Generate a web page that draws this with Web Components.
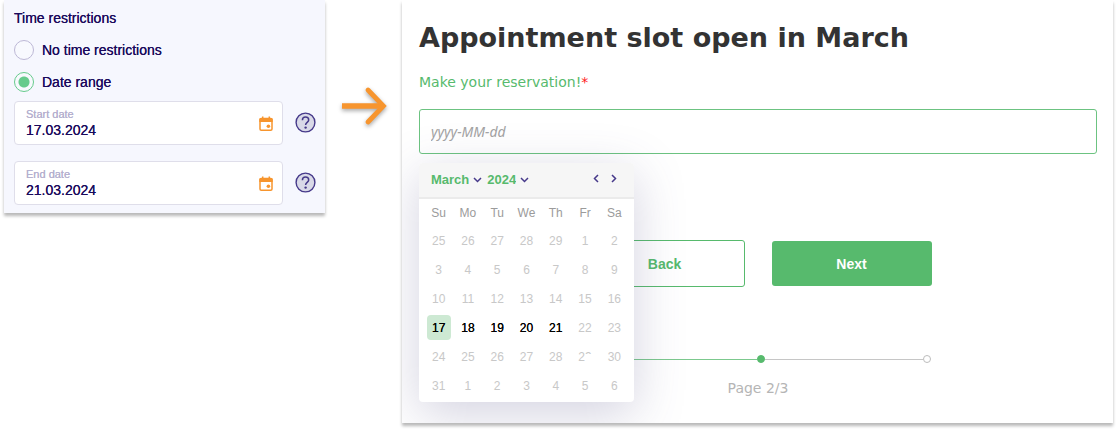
<!DOCTYPE html>
<html lang="en">
<head>
<meta charset="UTF-8">
<meta name="viewport" content="width=device-width, initial-scale=1">
<title>Appointment slot</title>
<style>
    body {
        margin: 0;
        background: #ffffff;
        font-family: "Liberation Sans", Arial, sans-serif;
    }

    main {
        display: flex;
        align-items: flex-start;
        padding: 0 5px 8px 4px;
    }

    time-restrictions {
        flex: 0 0 321px;
    }

    booking-form {
        flex: 1;
        min-width: 0;
    }
</style>
</head>
<body>
<main>
    <time-restrictions>
        <date-field label="Start date" value="17.03.2024"></date-field>
        <date-field label="End date" value="21.03.2024"></date-field>
    </time-restrictions>
    <flow-arrow></flow-arrow>
    <booking-form>
        <span slot="title">Appointment slot open in March</span>
        <span slot="question">Make your reservation!</span>
        <month-calendar slot="calendar" month="March" year="2024" selected="17" until="21"></month-calendar>
        <page-progress slot="progress" current="2" total="3"></page-progress>
    </booking-form>
</main>

<script>
    // Settings panel with the kind of restriction and its dates
    class TimeRestrictions extends HTMLElement {
        constructor() {
            super();
            this.attachShadow({ mode: 'open' });
        }

        connectedCallback() {
            this.shadowRoot.innerHTML = `
                <style>
                    :host {
                        display: block;
                        box-sizing: border-box;
                        padding: 10px 9px 8px 10px;
                        background: #f6f7fe;
                        color: #1a0a5c;
                        box-shadow: 0 3px 3px rgba(0,0,0,0.28);
                    }

                    fieldset {
                        border: 0;
                        margin: 0;
                        padding: 0;
                        min-width: 0;
                    }

                    legend {
                        padding: 0;
                        font-size: 14px;
                        line-height: 16px;
                        text-shadow: 0 0 currentColor;
                    }

                    .options {
                        display: grid;
                        gap: 12px;
                        padding: 14px 0 9px;
                    }

                    label {
                        display: flex;
                        align-items: center;
                        gap: 8px;
                        font-size: 14px;
                        line-height: 20px;
                        text-shadow: 0 0 currentColor;
                    }

                    input {
                        appearance: none;
                        box-sizing: border-box;
                        width: 20px;
                        height: 20px;
                        margin: 0;
                        border: 1px solid #bdb8d6;
                        border-radius: 50%;
                        background: #f8f9fe;
                    }

                    input:checked {
                        border-color: #66cb8c;
                        background: radial-gradient(circle, #66cb8c 5px, #f8f9fe 6px);
                    }

                    .dates {
                        display: grid;
                        gap: 16px;
                    }
                </style>

                <fieldset>
                    <legend>Time restrictions</legend>
                    <div class="options">
                        <label><input type="radio" name="restriction" value="none">No time restrictions</label>
                        <label><input type="radio" name="restriction" value="range" checked>Date range</label>
                    </div>
                    <div class="dates"><slot></slot></div>
                </fieldset>
            `;
        }
    }

    // Date box with a calendar icon and a help button next to it
    class DateField extends HTMLElement {
        constructor() {
            super();
            this.attachShadow({ mode: 'open' });
        }

        connectedCallback() {
            const label = this.getAttribute('label') || '';
            const value = this.getAttribute('value') || '';

            this.shadowRoot.innerHTML = `
                <style>
                    :host {
                        display: flex;
                        align-items: center;
                        gap: 12px;
                    }

                    .box {
                        flex: 1;
                        min-width: 0;
                        display: flex;
                        align-items: center;
                        box-sizing: border-box;
                        height: 44px;
                        padding: 0 9px 0 11px;
                        border: 1px solid #dfdeea;
                        border-radius: 4px;
                        background: #ffffff;
                    }

                    .text {
                        flex: 1;
                        min-width: 0;
                        display: grid;
                    }

                    label {
                        font-size: 11px;
                        line-height: 14px;
                        color: #b5b0cf;
                        text-shadow: 0 0 currentColor;
                    }

                    input {
                        width: 100%;
                        box-sizing: border-box;
                        height: 18px;
                        padding: 0;
                        border: 0;
                        outline: 0;
                        background: none;
                        font: 14px/18px "Liberation Sans", Arial, sans-serif;
                        color: #1a0a5c;
                        text-shadow: 0 0 currentColor;
                    }

                    button {
                        display: block;
                        padding: 0;
                        border: 0;
                        background: none;
                    }

                    svg {
                        display: block;
                    }
                </style>

                <div class="box">
                    <div class="text">
                        <label for="date">${label}</label>
                        <input id="date" type="text" value="${value}">
                    </div>
                    <button type="button" aria-label="Open calendar">
                        <svg width="14" height="15" viewBox="0 0 14 15">
                            <rect x="1" y="2.5" width="12" height="11.7" rx="1.2" fill="none" stroke="#f7952e" stroke-width="1.5"/>
                            <path d="M.3 2.6h13.4V6H.3z" fill="#f7952e"/>
                            <path d="M3.7.4v3M10.3.4v3" stroke="#f7952e" stroke-width="1.5"/>
                            <circle cx="9.4" cy="10.3" r="1.8" fill="#f7952e"/>
                        </svg>
                    </button>
                </div>
                <button type="button" aria-label="Help">
                    <svg width="21" height="22" viewBox="0 0 21 22">
                        <circle cx="10.5" cy="10.5" r="9.4" fill="#d9d9e8" stroke="#46398a" stroke-width="1.4"/>
                        <path d="M7.4 8.2c0-1.9 1.3-3.1 3.1-3.1s3.2 1.2 3.2 2.9c0 2.3-3.1 2.5-3.1 4.9" fill="none" stroke="#46398a" stroke-width="1.5"/>
                        <circle cx="10.6" cy="15.6" r="1.2" fill="#46398a"/>
                    </svg>
                </button>
            `;
        }
    }

    // Orange arrow between the settings and the form
    class FlowArrow extends HTMLElement {
        constructor() {
            super();
            this.attachShadow({ mode: 'open' });
            this.shadowRoot.innerHTML = `
                <style>
                    :host {
                        display: block;
                        padding: 86px 13px 0 15px;
                    }

                    svg {
                        display: block;
                        filter: drop-shadow(0 2px 2px rgba(0,0,0,0.35));
                    }
                </style>
                <svg width="49" height="40" viewBox="0 0 49 40" fill="none" stroke="#f7952e">
                    <path d="M2 20h41" stroke-width="5.4"/>
                    <path d="M28 4l15.4 16L28 36" stroke-width="4.8" stroke-linecap="round"/>
                </svg>
            `;
        }
    }

    // Form page with the date question
    class BookingForm extends HTMLElement {
        constructor() {
            super();
            this.attachShadow({ mode: 'open' });
        }

        connectedCallback() {
            this.shadowRoot.innerHTML = `
                <style>
                    :host {
                        display: block;
                        background: #ffffff;
                        box-shadow: 0 3px 3px rgba(0,0,0,0.28);
                        font-family: "DejaVu Sans", Verdana, sans-serif;
                    }

                    form {
                        overflow: hidden;
                        padding: 22px 16px 25px 17px;
                    }

                    h1 {
                        margin: 0 0 18px;
                        font-size: 27px;
                        line-height: 32px;
                        color: #333333;
                    }

                    label {
                        display: block;
                        margin-bottom: 17px;
                        font-size: 14px;
                        line-height: 20px;
                        color: #57ba6d;
                    }

                    .required {
                        color: #ff1a1a;
                    }

                    .field {
                        position: relative;
                    }

                    input {
                        display: block;
                        width: 100%;
                        box-sizing: border-box;
                        height: 45px;
                        padding: 0 11px;
                        border: 1px solid #6cc381;
                        border-radius: 3px;
                        outline: 0;
                        background: #ffffff;
                        font: 14px/20px "Noto Sans", sans-serif;
                    }

                    input::placeholder {
                        color: #a3a3a3;
                        font-style: italic;
                    }

                    /* The calendar opens over whatever follows the field */
                    ::slotted(month-calendar) {
                        position: absolute;
                        top: calc(100% + 9px);
                        left: 0;
                        z-index: 1;
                    }

                    .buttons {
                        display: flex;
                        justify-content: center;
                        align-items: center;
                        gap: 27px;
                        margin: 86px 0 68px;
                    }

                    button {
                        box-sizing: border-box;
                        width: 160px;
                        height: 45px;
                        border: 0;
                        border-radius: 3px;
                        background: #57ba6d;
                        color: #ffffff;
                        font: bold 14px/20px "Liberation Sans", Arial, sans-serif;
                    }

                    .back {
                        height: 47px;
                        border: 1px solid #57ba6d;
                        background: #ffffff;
                        color: #57ba6d;
                    }
                </style>

                <form>
                    <h1><slot name="title"></slot></h1>
                    <label for="answer"><slot name="question"></slot><span class="required">*</span></label>
                    <div class="field">
                        <input id="answer" type="text" placeholder="yyyy-MM-dd">
                        <slot name="calendar"></slot>
                    </div>
                    <div class="buttons">
                        <button type="button" class="back">Back</button>
                        <button type="button" class="next">Next</button>
                    </div>
                    <slot name="progress"></slot>
                </form>
            `;
        }
    }

    // Month view, days outside selected..until are disabled
    class MonthCalendar extends HTMLElement {
        constructor() {
            super();
            this.attachShadow({ mode: 'open' });
        }

        connectedCallback() {
            const month = this.getAttribute('month');
            const year = parseInt(this.getAttribute('year'));
            const names = ['January', 'February', 'March', 'April', 'May', 'June', 'July',
                'August', 'September', 'October', 'November', 'December'];
            const options = names.map(n => `<option${n === month ? ' selected' : ''}>${n}</option>`).join('');
            const years = [year - 1, year, year + 1]
                .map(y => `<option${y === year ? ' selected' : ''}>${y}</option>`).join('');
            const down = `<svg width="9" height="6" viewBox="0 0 9 6"><path d="M1 1l3.5 3.5L8 1"/></svg>`;

            this.shadowRoot.innerHTML = `
                <style>
                    :host {
                        display: block;
                        width: 215px;
                        border-radius: 4px;
                        background: #ffffff;
                        box-shadow: 0 12px 50px rgba(80,75,130,0.25);
                        font-family: "Liberation Sans", Arial, sans-serif;
                    }

                    header {
                        display: flex;
                        align-items: center;
                        gap: 5px;
                        height: 34px;
                        padding: 0 15px 0 12px;
                        border-bottom: 2px solid #ebebeb;
                        border-radius: 4px 4px 0 0;
                        background: #f6f6f6;
                    }

                    .pick {
                        display: flex;
                        align-items: center;
                        gap: 4px;
                    }

                    select {
                        appearance: none;
                        field-sizing: content;
                        padding: 0;
                        border: 0;
                        background: none;
                        color: #57ba6d;
                        font: bold 13px/18px "Liberation Sans", Arial, sans-serif;
                    }

                    svg {
                        display: block;
                        fill: none;
                        stroke: #46398a;
                        stroke-width: 1.5;
                        pointer-events: none;
                    }

                    nav {
                        display: flex;
                        gap: 8px;
                        margin-left: auto;
                    }

                    button {
                        display: block;
                        padding: 0;
                        border: 0;
                        background: none;
                    }

                    nav button {
                        padding: 0 2px 3px;
                    }

                    .month {
                        padding: 0 5px 2px;
                    }

                    table {
                        width: 100%;
                        table-layout: fixed;
                        border-collapse: collapse;
                        font-size: 12px;
                        line-height: 16px;
                    }

                    th, td {
                        padding: 0;
                        height: 29px;
                    }

                    th {
                        height: 27px;
                        font-weight: normal;
                        color: #9b9b9b;
                    }

                    td button {
                        position: relative;
                        width: 24px;
                        height: 25px;
                        margin: 0 auto;
                        border-radius: 4px;
                        font: 12px/16px "Liberation Sans", Arial, sans-serif;
                        color: #000000;
                        text-shadow: 0 0 currentColor;
                    }

                    td button:disabled {
                        color: #c8c8c8;
                        text-shadow: none;
                    }

                    .selected {
                        background: #cde9d3;
                    }

                    /* White patch over the foot of the last digit */
                    .patched::after {
                        content: "";
                        position: absolute;
                        right: 4px;
                        bottom: 6px;
                        width: 8px;
                        height: 9px;
                        background: #ffffff;
                    }
                </style>

                <header>
                    <label class="pick"><select aria-label="Month">${options}</select>${down}</label>
                    <label class="pick"><select aria-label="Year">${years}</select>${down}</label>
                    <nav>
                        <button type="button" aria-label="Previous month">
                            <svg width="6" height="9" viewBox="0 0 6 9"><path d="M5 1L1.5 4.5 5 8"/></svg>
                        </button>
                        <button type="button" aria-label="Next month">
                            <svg width="6" height="9" viewBox="0 0 6 9"><path d="M1 1l3.5 3.5L1 8"/></svg>
                        </button>
                    </nav>
                </header>
                <div class="month">
                    <table>
                        <thead>
                            <tr>${['Su', 'Mo', 'Tu', 'We', 'Th', 'Fr', 'Sa'].map(d => `<th>${d}</th>`).join('')}</tr>
                        </thead>
                        <tbody>${this.renderWeeks(year, names.indexOf(month))}</tbody>
                    </table>
                </div>
            `;
        }

        renderWeeks(year, month) {
            const selected = parseInt(this.getAttribute('selected'));
            const until = parseInt(this.getAttribute('until'));
            const offset = new Date(year, month, 1).getDay();
            let html = '';

            for (let i = 0; i < 42; i++) {
                const date = new Date(year, month, 1 - offset + i);
                const day = date.getDate();
                const inside = date.getMonth() === month;
                const open = inside && day >= selected && day <= until;
                const classes = [];
                if (inside && day === selected) classes.push('selected');
                if (inside && day === 29) classes.push('patched');

                if (i % 7 === 0) html += '<tr>';
                html += `<td><button type="button" class="${classes.join(' ')}"${open ? '' : ' disabled'}>${day}</button></td>`;
                if (i % 7 === 6) html += '</tr>';
            }
            return html;
        }
    }

    // Dots for the form's pages, with the page number below
    class PageProgress extends HTMLElement {
        constructor() {
            super();
            this.attachShadow({ mode: 'open' });
        }

        connectedCallback() {
            const current = parseInt(this.getAttribute('current')) || 1;
            const total = parseInt(this.getAttribute('total')) || 1;
            let track = '';
            for (let i = 1; i <= total; i++) {
                if (i > 1) track += `<i class="line ${i <= current ? 'done' : ''}"></i>`;
                track += `<i class="dot ${i <= current ? 'done' : ''}"></i>`;
            }

            this.shadowRoot.innerHTML = `
                <style>
                    :host {
                        display: block;
                        width: 346px;
                        margin: 0 auto;
                        text-align: center;
                        font-size: 14px;
                        line-height: 20px;
                        color: #b5b5b5;
                    }

                    .track {
                        display: flex;
                        align-items: center;
                        padding-left: 6px;
                        margin-bottom: 15px;
                    }

                    .dot {
                        box-sizing: border-box;
                        width: 8px;
                        height: 8px;
                        border: 1px solid #bdbdbd;
                        border-radius: 50%;
                    }

                    .dot.done {
                        border-color: #57ba6d;
                        background: #57ba6d;
                    }

                    .line {
                        flex: 1;
                        height: 1px;
                        background: #c6c6c6;
                    }

                    .line.done {
                        background: #7cc98e;
                    }
                </style>
                <div class="track">${track}</div>
                Page ${current}/${total}
            `;
        }
    }

    customElements.define('time-restrictions', TimeRestrictions);
    customElements.define('date-field', DateField);
    customElements.define('flow-arrow', FlowArrow);
    customElements.define('booking-form', BookingForm);
    customElements.define('month-calendar', MonthCalendar);
    customElements.define('page-progress', PageProgress);
</script>
</body>
</html>
